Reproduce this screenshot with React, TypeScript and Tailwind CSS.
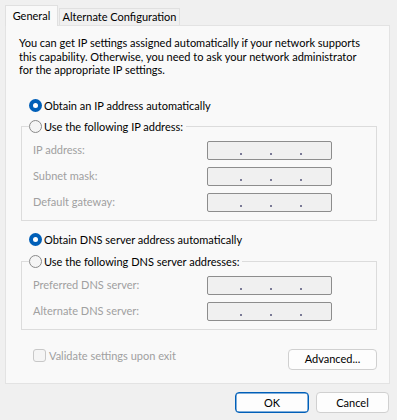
import React from "react";

function Radio({ checked }: { checked?: boolean }) {
  return checked ? (
    <span className="flex h-[13px] w-[13px] shrink-0 items-center justify-center rounded-full bg-[#005fb8]">
      <span className="h-[5px] w-[5px] rounded-full bg-white" />
    </span>
  ) : (
    <span className="h-[13px] w-[13px] shrink-0 rounded-full border border-[#8a8a8a] bg-[#f5f5f5]" />
  );
}

function IpBox() {
  return (
    <div className="flex h-[19px] w-[125px] items-end rounded-[2px] border border-[#8d8d8d] bg-[#f0f0f0] pb-[4px] pl-[32px]">
      <div className="flex gap-[28px]">
        <span className="h-[2px] w-[2px] bg-[#7a7a96]" />
        <span className="h-[2px] w-[2px] bg-[#7a7a96]" />
        <span className="h-[2px] w-[2px] bg-[#7a7a96]" />
      </div>
    </div>
  );
}

function Row({ label }: { label: string }) {
  return (
    <div className="flex items-center">
      <span className="w-[185px] pl-[11px] text-[#a0a0a0]">{label}</span>
      <IpBox />
    </div>
  );
}

function Group({ legend, rows }: { legend: string; rows: string[] }) {
  return (
    <fieldset className="ml-[2px] w-[356px] border border-[#dcdcdc] pb-[8px]">
      <legend className="ml-[7px] flex items-center gap-[2px] pr-[3px] leading-[14px]">
        <Radio />
        <span>{legend}</span>
      </legend>
      <div className="mt-[7px] flex flex-col gap-[7px]">
        {rows.map((r) => (
          <Row key={r} label={r} />
        ))}
      </div>
    </fieldset>
  );
}

export default function App() {
  return (
    <div
      className="h-[420px] w-[397px] overflow-hidden bg-[#f0f0f0] text-[11px] leading-[14px] text-black"
      style={{ fontFamily: "Lato, 'Noto Sans', sans-serif" }}
    >
      <div className="flex h-[25px] items-end pl-[5px]">
        <div className="relative z-10 -mb-px flex h-[21px] w-[53px] items-center justify-center whitespace-nowrap border border-b-0 border-[#e0e0e0] bg-[#f9f9f9] pb-[1px]">
          General
        </div>
        <div className="ml-px flex h-[17px] w-[121px] items-center justify-center whitespace-nowrap border border-b-0 border-[#e0e0e0] bg-[#f0f0f0]">
          Alternate Configuration
        </div>
      </div>
      <div className="ml-[5px] h-[359px] w-[385px] border border-[#e3e3e3] bg-[#f9f9f9] pl-[13px] pt-[10px]">
        <p className="whitespace-nowrap leading-[13.5px]">
          You can get IP settings assigned automatically if your network supports
          <br />
          this capability. Otherwise, you need to ask your network administrator
          <br />
          for the appropriate IP settings.
        </p>
        <div className="ml-[10px] mt-[22px] flex items-center gap-[2px]">
          <Radio checked />
          <span>Obtain an IP address automatically</span>
        </div>
        <div className="mt-[7px]">
          <Group
            legend="Use the following IP address:"
            rows={["IP address:", "Subnet mask:", "Default gateway:"]}
          />
        </div>
        <div className="ml-[10px] mt-[12px] flex items-center gap-[2px]">
          <Radio checked />
          <span>Obtain DNS server address automatically</span>
        </div>
        <div className="mt-[8px]">
          <Group
            legend="Use the following DNS server addresses:"
            rows={["Preferred DNS server:", "Alternate DNS server:"]}
          />
        </div>
        <div className="mt-[19px] flex items-start justify-between pr-[12px]">
          <div className="ml-[14px] flex items-center gap-[3px] text-[#a0a0a0]">
            <span className="h-[13px] w-[13px] rounded-[3px] border border-[#c8c8c8] bg-[#f5f5f5]" />
            <span>Validate settings upon exit</span>
          </div>
          <button className="flex h-[21px] w-[89px] items-center justify-center rounded-[4px] border border-[#d0d0d0] bg-[#fdfdfd] text-black">
            Advanced...
          </button>
        </div>
      </div>
      <div className="mt-[8px] flex justify-end gap-[7px] pr-[8px]">
        <button className="flex h-[21px] w-[74px] items-center justify-center rounded-[4px] border border-[#005fb8] bg-[#fdfdfd] shadow-[inset_0_0_0_0.5px_#005fb8]">
          OK
        </button>
        <button className="flex h-[21px] w-[73px] items-center justify-center rounded-[4px] border border-[#d0d0d0] bg-[#fdfdfd]">
          Cancel
        </button>
      </div>
    </div>
  );
}
